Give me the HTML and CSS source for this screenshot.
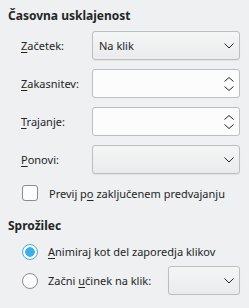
FILE: index.html
```html
<!DOCTYPE html>
<html lang="sl">

<head>
    <meta charset="UTF-8">
    <title>Časovna usklajenost</title>
    <link rel="stylesheet" href="styles.css">
</head>

<body>
    <div class="panel">
        <div class="group-title">Časovna usklajenost</div>

        <div class="form">
            <label class="label"><u>Z</u>ačetek:</label>
            <div class="combo">
                <span>Na klik</span>
                <svg class="chevron" width="10" height="6" viewBox="0 0 10 6"><path d="M0.5 0.5 L5 5 L9.5 0.5" fill="none" stroke="#232627" stroke-width="1"/></svg>
            </div>

            <label class="label"><u>Z</u>akasnitev:</label>
            <div class="spin">
                <svg class="spin-arrows" width="10" height="14" viewBox="0 0 10 14"><path d="M0.5 4.5 L5 0.5 L9.5 4.5 M0.5 9.5 L5 13.5 L9.5 9.5" fill="none" stroke="#232627" stroke-width="1"/></svg>
            </div>

            <label class="label"><u>T</u>rajanje:</label>
            <div class="spin">
                <svg class="spin-arrows" width="10" height="14" viewBox="0 0 10 14"><path d="M0.5 4.5 L5 0.5 L9.5 4.5 M0.5 9.5 L5 13.5 L9.5 9.5" fill="none" stroke="#232627" stroke-width="1"/></svg>
            </div>

            <label class="label"><u>P</u>onovi:</label>
            <div class="combo">
                <span></span>
                <svg class="chevron" width="10" height="6" viewBox="0 0 10 6"><path d="M0.5 0.5 L5 5 L9.5 0.5" fill="none" stroke="#232627" stroke-width="1"/></svg>
            </div>
        </div>

        <div class="check-row">
            <span class="checkbox"></span>
            <span>Previj p<u>o</u> zaključenem predvajanju</span>
        </div>

        <div class="group-title trigger">Sprožilec</div>

        <div class="radio-row first">
            <span class="radio checked"></span>
            <span><u>A</u>nimiraj kot del zaporedja klikov</span>
        </div>
        <div class="radio-row">
            <span class="radio"></span>
            <span>Začni <u>u</u>činek na klik:</span>
            <div class="combo small">
                <span></span>
                <svg class="chevron" width="10" height="6" viewBox="0 0 10 6"><path d="M0.5 0.5 L5 5 L9.5 0.5" fill="none" stroke="#232627" stroke-width="1"/></svg>
            </div>
        </div>
    </div>
</body>

</html>
```

FILE: styles.css
```css
body {
    margin: 0;
    background: #eff0f1;
    color: #232627;
    font-family: "Noto Sans", "DejaVu Sans", sans-serif;
    font-size: 11px;
}

.panel {
    padding: 8px 9px 0 8px;
}

.group-title {
    font-weight: bold;
    font-size: 12px;
    line-height: 16px;
}

.form {
    display: grid;
    grid-template-columns: 71px 1fr;
    grid-auto-rows: 29px;
    row-gap: 9px;
    margin-top: 7px;
    padding-left: 13px;
    align-items: center;
}

.label {
    line-height: 16px;
}

u {
    text-decoration-thickness: 1px;
    text-underline-offset: 2px;
}

.combo,
.spin {
    height: 29px;
    box-sizing: border-box;
    border: 1px solid #bcbebf;
    border-radius: 3px;
    display: flex;
    align-items: center;
    justify-content: space-between;
    padding: 0 5px 0 6px;
}

.combo {
    background: linear-gradient(#f4f5f5, #eaebec);
    box-shadow: 0 1px 1px rgba(0, 0, 0, 0.06);
}

.spin {
    background: #fcfcfc;
    justify-content: flex-end;
}

.check-row {
    display: flex;
    align-items: center;
    gap: 11px;
    margin-top: 11px;
    padding-left: 14px;
    height: 16px;
    white-space: nowrap;
}

.checkbox {
    width: 16px;
    height: 16px;
    box-sizing: border-box;
    border: 1px solid #8a8d8f;
    border-radius: 3px;
    background: #fcfcfc;
    flex-shrink: 0;
}

.trigger {
    margin-top: 17px;
}

.radio-row {
    display: flex;
    align-items: center;
    gap: 10px;
    padding-left: 14px;
    height: 29px;
    white-space: nowrap;
}

.radio-row.first {
    margin-top: 3px;
}

.radio {
    width: 16px;
    height: 16px;
    box-sizing: border-box;
    border: 1px solid #8a8d8f;
    border-radius: 50%;
    background: #fcfcfc;
    flex-shrink: 0;
}

.radio.checked {
    border-color: #3daee9;
    background: radial-gradient(circle, #3daee9 0, #3daee9 4.5px, #fcfcfc 5px);
}

.combo.small {
    width: 72px;
    margin-left: auto;
}
```
